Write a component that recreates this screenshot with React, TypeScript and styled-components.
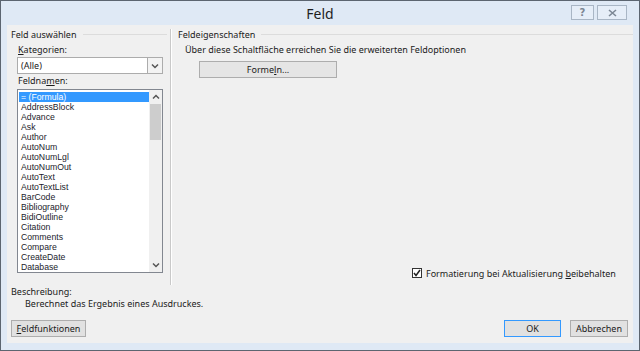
import { createGlobalStyle, styled } from "styled-components"

const GlobalStyle = createGlobalStyle`
  html, body {
    margin: 0;
    padding: 0;
    background: #ffffff;
  }
  body {
    font-family: "Noto Sans", "Open Sans", sans-serif;
    font-size: 9px;
    color: #1b1b1b;
  }
`

const fieldNames = [
  '= (Formula)',
  'AddressBlock',
  'Advance',
  'Ask',
  'Author',
  'AutoNum',
  'AutoNumLgl',
  'AutoNumOut',
  'AutoText',
  'AutoTextList',
  'BarCode',
  'Bibliography',
  'BidiOutline',
  'Citation',
  'Comments',
  'Compare',
  'CreateDate',
  'Database',
]

export default function App() {
  return (
    <>
      <GlobalStyle />
      <Window>
        <TitleBar>
          <Title>Feld</Title>
          <TitleButtons>
            <CaptionButton $w={23}>
              <HelpGlyph>?</HelpGlyph>
            </CaptionButton>
            <CaptionButton $w={30}>
              <svg width="9" height="8" viewBox="0 0 9 8">
                <path d="M1 1 L8 7 M8 1 L1 7" stroke="#7c8794" strokeWidth="1.6" fill="none" />
              </svg>
            </CaptionButton>
          </TitleButtons>
        </TitleBar>

        <Client>
          <Panes>
            <LeftPane>
              <GroupHeader>Feld auswählen</GroupHeader>
              <FieldLabel $top={4}><u>K</u>ategorien:</FieldLabel>
              <Combo>
                <ComboText>(Alle)</ComboText>
                <ComboButton>
                  <Chevron dir="down" />
                </ComboButton>
              </Combo>
              <FieldLabel $top={1}>Feldna<u>m</u>en:</FieldLabel>
              <ListBox>
                <ListItems>
                  {fieldNames.map((name, i) => (
                    <ListItem key={name} $selected={i === 0}>{name}</ListItem>
                  ))}
                </ListItems>
                <ScrollBar>
                  <ScrollArrow><Chevron dir="up" /></ScrollArrow>
                  <ScrollTrack>
                    <ScrollThumb />
                  </ScrollTrack>
                  <ScrollArrow><Chevron dir="down" /></ScrollArrow>
                </ScrollBar>
              </ListBox>
            </LeftPane>

            <Separator />

            <RightPane>
              <GroupHeader>Feldeigenschaften</GroupHeader>
              <Hint>Über diese Schaltfläche erreichen Sie die erweiterten Feldoptionen</Hint>
              <FormulaButton>Forme<u>l</u>n...</FormulaButton>
              <Spacer />
              <CheckRow>
                <CheckBox>
                  <svg width="8" height="8" viewBox="0 0 8 8">
                    <path d="M1 4 L3 6.5 L7 1" stroke="#222" strokeWidth="1.5" fill="none" />
                  </svg>
                </CheckBox>
                <span>Formatierung bei Aktualisierung <u>b</u>eibehalten</span>
              </CheckRow>
            </RightPane>
          </Panes>

          <Description>
            <DescLabel>Beschreibung:</DescLabel>
            <DescText>Berechnet das Ergebnis eines Ausdruckes.</DescText>
          </Description>

          <ButtonRow>
            <DialogButton $w={75}><u>F</u>eldfunktionen</DialogButton>
            <RightButtons>
              <DialogButton $w={57} $default>OK</DialogButton>
              <DialogButton $w={58}>Abbrechen</DialogButton>
            </RightButtons>
          </ButtonRow>
        </Client>
      </Window>
    </>
  )
}

function Chevron({ dir }: { dir: 'up' | 'down' }) {
  const d = dir === 'down' ? 'M1 1.5 L4 4.5 L7 1.5' : 'M1 4.5 L4 1.5 L7 4.5'
  return (
    <svg width="8" height="6" viewBox="0 0 8 6">
      <path d={d} stroke="#555" strokeWidth="1.5" fill="none" />
    </svg>
  )
}

const Window = styled.div`
  width: 640px;
  height: 351px;
  box-sizing: border-box;
  border: 1px solid #5c6570;
  background: #dfe9f5;
  padding: 0 6px 7px 6px;
  display: flex;
  flex-direction: column;
`

const TitleBar = styled.div`
  height: 24px;
  position: relative;
  display: flex;
  align-items: center;
  justify-content: center;
`

const Title = styled.div`
  font-size: 14px;
  color: #1e1e1e;
`

const TitleButtons = styled.div`
  position: absolute;
  right: 6px;
  top: 4px;
  display: flex;
  gap: 3px;
`

const CaptionButton = styled.div<{ $w: number }>`
  width: ${({ $w }) => $w}px;
  height: 15px;
  box-sizing: border-box;
  border: 1px solid #a9b6c5;
  background: #e6eef8;
  display: flex;
  align-items: center;
  justify-content: center;
`

const HelpGlyph = styled.span`
  font-family: "DejaVu Sans", sans-serif;
  font-size: 10px;
  font-weight: bold;
  color: #7c8794;
  line-height: 1;
`

const Client = styled.div`
  flex: 1;
  background: #f0f0f0;
  display: flex;
  flex-direction: column;
`

const Panes = styled.div`
  display: flex;
  height: 260px;
`

const LeftPane = styled.div`
  width: 156px;
  padding: 3px 0 0 4px;
  display: flex;
  flex-direction: column;
`

const Separator = styled.div`
  width: 1px;
  margin: 4px 0 0 3px;
  background: #c9c9c9;
  border-right: 1px solid #ffffff;
`

const RightPane = styled.div`
  flex: 1;
  padding: 3px 0 0 6px;
  display: flex;
  flex-direction: column;
`

const GroupHeader = styled.div`
  display: flex;
  align-items: center;
  gap: 6px;
  height: 12px;
  white-space: nowrap;

  &::after {
    content: "";
    flex: 1;
    height: 1px;
    background: #dcdcdc;
  }
`

const FieldLabel = styled.div<{ $top: number }>`
  height: 12px;
  margin: ${({ $top }) => $top}px 0 1px 7px;
  line-height: 12px;
`

const Combo = styled.div`
  margin-left: 6px;
  width: 146px;
  height: 17px;
  box-sizing: border-box;
  border: 1px solid #acacac;
  background: #ffffff;
  display: flex;
`

const ComboText = styled.div`
  flex: 1;
  padding-left: 3px;
  line-height: 15px;
`

const ComboButton = styled.div`
  width: 14px;
  border-left: 1px solid #acacac;
  background: #f3f3f3;
  display: flex;
  align-items: center;
  justify-content: center;
`

const ListBox = styled.div`
  margin: 1px 0 0 6px;
  width: 146px;
  height: 184px;
  box-sizing: border-box;
  border: 1px solid #828790;
  background: #ffffff;
  display: flex;
  overflow: hidden;
`

const ListItems = styled.div`
  flex: 1;
  padding: 2px 0 0 1px;
  display: flex;
  flex-direction: column;
`

const ListItem = styled.div<{ $selected?: boolean }>`
  height: 10.06px;
  line-height: 10px;
  font-family: "Liberation Sans", Arial, sans-serif;
  font-size: 8.7px;
  padding-left: 2px;
  white-space: nowrap;
  background: ${({ $selected }) => ($selected ? "#3399ff" : "transparent")};
  color: ${({ $selected }) => ($selected ? "#ffffff" : "#1b1b2b")};
`

const ScrollBar = styled.div`
  width: 13px;
  display: flex;
  flex-direction: column;
  background: #f0f0f0;
`

const ScrollArrow = styled.div`
  height: 14px;
  display: flex;
  align-items: center;
  justify-content: center;
`

const ScrollTrack = styled.div`
  flex: 1;
  padding: 0 1px;
`

const ScrollThumb = styled.div`
  height: 36px;
  background: #cdcdcd;
`

const Hint = styled.div`
  margin: 4px 0 0 7px;
  height: 12px;
  line-height: 12px;
`

const FormulaButton = styled.div`
  margin: 5px 0 0 21px;
  width: 138px;
  height: 17px;
  box-sizing: border-box;
  border: 1px solid #adadad;
  background: #e5e5e5;
  display: flex;
  align-items: center;
  justify-content: center;
`

const Spacer = styled.div`
  flex: 1;
`

const CheckRow = styled.div`
  display: flex;
  align-items: center;
  gap: 4px;
  margin: 0 0 6px 234px;
  height: 12px;
`

const CheckBox = styled.div`
  width: 10px;
  height: 10px;
  box-sizing: border-box;
  border: 1px solid #333;
  background: #ffffff;
  display: flex;
  align-items: center;
  justify-content: center;
`

const Description = styled.div`
  padding: 1px 0 0 4px;
  display: flex;
  flex-direction: column;
`

const DescLabel = styled.div`
  height: 12px;
  line-height: 12px;
`

const DescText = styled.div`
  height: 12px;
  line-height: 12px;
  margin-left: 14px;
`

const ButtonRow = styled.div`
  display: flex;
  justify-content: space-between;
  margin-top: auto;
  padding: 0 5px 6px 4px;
`

const RightButtons = styled.div`
  display: flex;
  gap: 9px;
`

const DialogButton = styled.div<{ $w: number; $default?: boolean }>`
  width: ${({ $w }) => $w}px;
  height: 17px;
  box-sizing: border-box;
  border: 1px solid ${({ $default }) => ($default ? "#3399ff" : "#adadad")};
  background: #e1e1e1;
  display: flex;
  align-items: center;
  justify-content: center;
`
